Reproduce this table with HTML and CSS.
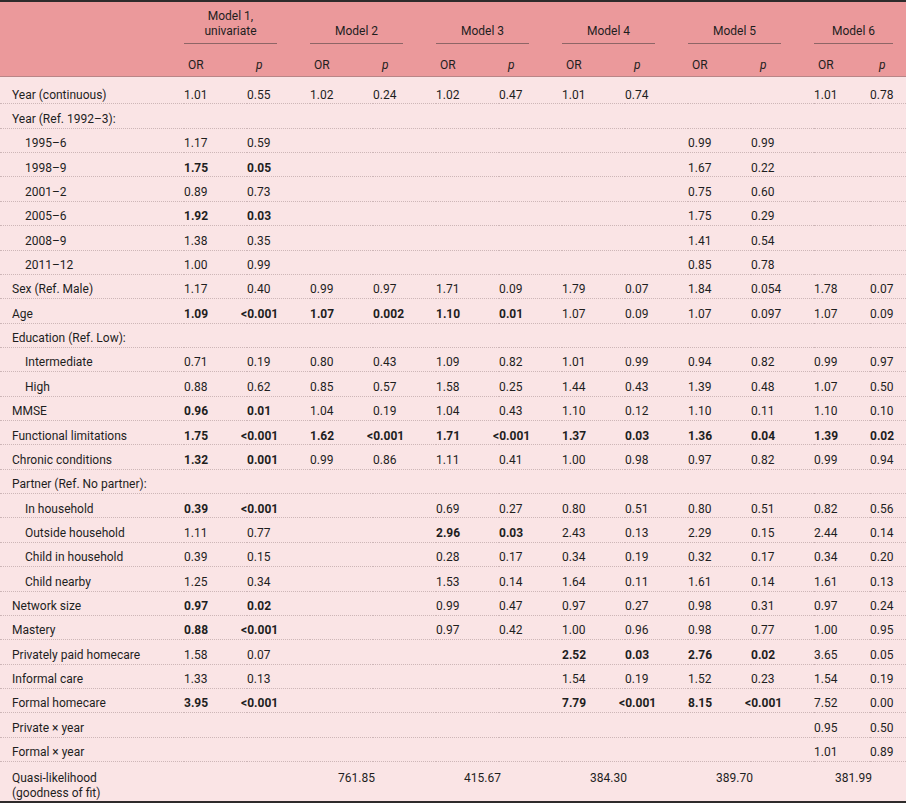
FILE: index.html
```html
<!DOCTYPE html>
<html lang="en">
<head>
<meta charset="utf-8">
<title>Table</title>
<link rel="stylesheet" href="styles.css">
</head>
<body>
<table class="t">
  <colgroup>
    <col class="c-lab">
    <col class="c-d"><col class="c-d">
    <col class="c-d"><col class="c-d">
    <col class="c-d"><col class="c-d">
    <col class="c-d"><col class="c-d">
    <col class="c-d"><col class="c-d">
    <col class="c-or6"><col class="c-p6">
  </colgroup>
  <thead>
    <tr class="h1">
      <th class="lab"></th>
      <th colspan="2" class="grp"><div class="gl">Model 1,<br>univariate</div></th>
      <th colspan="2" class="grp"><div class="gl">Model 2</div></th>
      <th colspan="2" class="grp"><div class="gl">Model 3</div></th>
      <th colspan="2" class="grp"><div class="gl">Model 4</div></th>
      <th colspan="2" class="grp"><div class="gl">Model 5</div></th>
      <th colspan="2" class="grp"><div class="gl last">Model 6</div></th>
    </tr>
    <tr class="h2">
      <th class="lab"></th>
      <th class="or">OR</th><th class="ph"><i>p</i></th>
      <th class="or">OR</th><th class="ph"><i>p</i></th>
      <th class="or">OR</th><th class="ph"><i>p</i></th>
      <th class="or">OR</th><th class="ph"><i>p</i></th>
      <th class="or">OR</th><th class="ph"><i>p</i></th>
      <th class="or">OR</th><th class="ph"><i>p</i></th>
    </tr>
  </thead>
  <tbody>
    <tr><td class="lab">Year (continuous)</td><td>1.01</td><td>0.55</td><td>1.02</td><td>0.24</td><td>1.02</td><td>0.47</td><td>1.01</td><td>0.74</td><td></td><td></td><td>1.01</td><td>0.78</td></tr>
    <tr><td class="lab">Year (Ref. 1992–3):</td><td></td><td></td><td></td><td></td><td></td><td></td><td></td><td></td><td></td><td></td><td></td><td></td></tr>
    <tr><td class="lab ind">1995–6</td><td>1.17</td><td>0.59</td><td></td><td></td><td></td><td></td><td></td><td></td><td>0.99</td><td>0.99</td><td></td><td></td></tr>
    <tr><td class="lab ind">1998–9</td><td class="b">1.75</td><td class="b">0.05</td><td></td><td></td><td></td><td></td><td></td><td></td><td>1.67</td><td>0.22</td><td></td><td></td></tr>
    <tr><td class="lab ind">2001–2</td><td>0.89</td><td>0.73</td><td></td><td></td><td></td><td></td><td></td><td></td><td>0.75</td><td>0.60</td><td></td><td></td></tr>
    <tr><td class="lab ind">2005–6</td><td class="b">1.92</td><td class="b">0.03</td><td></td><td></td><td></td><td></td><td></td><td></td><td>1.75</td><td>0.29</td><td></td><td></td></tr>
    <tr><td class="lab ind">2008–9</td><td>1.38</td><td>0.35</td><td></td><td></td><td></td><td></td><td></td><td></td><td>1.41</td><td>0.54</td><td></td><td></td></tr>
    <tr><td class="lab ind">2011–12</td><td>1.00</td><td>0.99</td><td></td><td></td><td></td><td></td><td></td><td></td><td>0.85</td><td>0.78</td><td></td><td></td></tr>
    <tr><td class="lab">Sex (Ref. Male)</td><td>1.17</td><td>0.40</td><td>0.99</td><td>0.97</td><td>1.71</td><td>0.09</td><td>1.79</td><td>0.07</td><td>1.84</td><td>0.054</td><td>1.78</td><td>0.07</td></tr>
    <tr><td class="lab">Age</td><td class="b">1.09</td><td class="b"><span class="lt">&lt;</span>0.001</td><td class="b">1.07</td><td class="b">0.002</td><td class="b">1.10</td><td class="b">0.01</td><td>1.07</td><td>0.09</td><td>1.07</td><td>0.097</td><td>1.07</td><td>0.09</td></tr>
    <tr><td class="lab">Education (Ref. Low):</td><td></td><td></td><td></td><td></td><td></td><td></td><td></td><td></td><td></td><td></td><td></td><td></td></tr>
    <tr><td class="lab ind">Intermediate</td><td>0.71</td><td>0.19</td><td>0.80</td><td>0.43</td><td>1.09</td><td>0.82</td><td>1.01</td><td>0.99</td><td>0.94</td><td>0.82</td><td>0.99</td><td>0.97</td></tr>
    <tr><td class="lab ind">High</td><td>0.88</td><td>0.62</td><td>0.85</td><td>0.57</td><td>1.58</td><td>0.25</td><td>1.44</td><td>0.43</td><td>1.39</td><td>0.48</td><td>1.07</td><td>0.50</td></tr>
    <tr><td class="lab">MMSE</td><td class="b">0.96</td><td class="b">0.01</td><td>1.04</td><td>0.19</td><td>1.04</td><td>0.43</td><td>1.10</td><td>0.12</td><td>1.10</td><td>0.11</td><td>1.10</td><td>0.10</td></tr>
    <tr><td class="lab">Functional limitations</td><td class="b">1.75</td><td class="b"><span class="lt">&lt;</span>0.001</td><td class="b">1.62</td><td class="b"><span class="lt">&lt;</span>0.001</td><td class="b">1.71</td><td class="b"><span class="lt">&lt;</span>0.001</td><td class="b">1.37</td><td class="b">0.03</td><td class="b">1.36</td><td class="b">0.04</td><td class="b">1.39</td><td class="b">0.02</td></tr>
    <tr><td class="lab">Chronic conditions</td><td class="b">1.32</td><td class="b">0.001</td><td>0.99</td><td>0.86</td><td>1.11</td><td>0.41</td><td>1.00</td><td>0.98</td><td>0.97</td><td>0.82</td><td>0.99</td><td>0.94</td></tr>
    <tr><td class="lab">Partner (Ref. No partner):</td><td></td><td></td><td></td><td></td><td></td><td></td><td></td><td></td><td></td><td></td><td></td><td></td></tr>
    <tr><td class="lab ind">In household</td><td class="b">0.39</td><td class="b"><span class="lt">&lt;</span>0.001</td><td></td><td></td><td>0.69</td><td>0.27</td><td>0.80</td><td>0.51</td><td>0.80</td><td>0.51</td><td>0.82</td><td>0.56</td></tr>
    <tr><td class="lab ind">Outside household</td><td>1.11</td><td>0.77</td><td></td><td></td><td class="b">2.96</td><td class="b">0.03</td><td>2.43</td><td>0.13</td><td>2.29</td><td>0.15</td><td>2.44</td><td>0.14</td></tr>
    <tr><td class="lab ind">Child in household</td><td>0.39</td><td>0.15</td><td></td><td></td><td>0.28</td><td>0.17</td><td>0.34</td><td>0.19</td><td>0.32</td><td>0.17</td><td>0.34</td><td>0.20</td></tr>
    <tr><td class="lab ind">Child nearby</td><td>1.25</td><td>0.34</td><td></td><td></td><td>1.53</td><td>0.14</td><td>1.64</td><td>0.11</td><td>1.61</td><td>0.14</td><td>1.61</td><td>0.13</td></tr>
    <tr><td class="lab">Network size</td><td class="b">0.97</td><td class="b">0.02</td><td></td><td></td><td>0.99</td><td>0.47</td><td>0.97</td><td>0.27</td><td>0.98</td><td>0.31</td><td>0.97</td><td>0.24</td></tr>
    <tr><td class="lab">Mastery</td><td class="b">0.88</td><td class="b"><span class="lt">&lt;</span>0.001</td><td></td><td></td><td>0.97</td><td>0.42</td><td>1.00</td><td>0.96</td><td>0.98</td><td>0.77</td><td>1.00</td><td>0.95</td></tr>
    <tr><td class="lab">Privately paid homecare</td><td>1.58</td><td>0.07</td><td></td><td></td><td></td><td></td><td class="b">2.52</td><td class="b">0.03</td><td class="b">2.76</td><td class="b">0.02</td><td>3.65</td><td>0.05</td></tr>
    <tr><td class="lab">Informal care</td><td>1.33</td><td>0.13</td><td></td><td></td><td></td><td></td><td>1.54</td><td>0.19</td><td>1.52</td><td>0.23</td><td>1.54</td><td>0.19</td></tr>
    <tr><td class="lab">Formal homecare</td><td class="b">3.95</td><td class="b"><span class="lt">&lt;</span>0.001</td><td></td><td></td><td></td><td></td><td class="b">7.79</td><td class="b"><span class="lt">&lt;</span>0.001</td><td class="b">8.15</td><td class="b"><span class="lt">&lt;</span>0.001</td><td>7.52</td><td>0.00</td></tr>
    <tr><td class="lab">Private × year</td><td></td><td></td><td></td><td></td><td></td><td></td><td></td><td></td><td></td><td></td><td>0.95</td><td>0.50</td></tr>
    <tr><td class="lab">Formal × year</td><td></td><td></td><td></td><td></td><td></td><td></td><td></td><td></td><td></td><td></td><td>1.01</td><td>0.89</td></tr>
    <tr class="fit">
      <td class="lab">Quasi-likelihood<br>(goodness of fit)</td>
      <td colspan="2"></td>
      <td colspan="2"><div class="gv">761.85</div></td>
      <td colspan="2"><div class="gv">415.67</div></td>
      <td colspan="2"><div class="gv">384.30</div></td>
      <td colspan="2"><div class="gv">389.70</div></td>
      <td colspan="2"><div class="gv last">381.99</div></td>
    </tr>
  </tbody>
</table>
</body>
</html>
```

FILE: styles.css
```css
html, body {
  margin: 0;
  padding: 0;
  background: #fae4e5;
}

.t {
  width: 906px;
  table-layout: fixed;
  border-collapse: separate;
  border-spacing: 0;
  border-top: 2px solid #2e2b2b;
  border-bottom: 2px solid #2e2b2b;
  font-family: Roboto, "Liberation Sans", sans-serif;
  font-size: 12px;
  color: #1e1e1e;
  background: #fae4e5;
}

.c-lab { width: 184px; }
.c-d { width: 63px; }
.c-or6 { width: 56px; }
.c-p6 { width: 36px; }

th, td {
  padding: 0;
  text-align: left;
  white-space: nowrap;
  line-height: 15px;
  font-weight: normal;
}

thead th {
  background: #eb999b;
}

.h1 th {
  padding-top: 7px;
  vertical-align: bottom;
}

.gl {
  width: 93px;
  text-align: center;
  padding-bottom: 4px;
  border-bottom: 1px solid #8e6566;
}

.gl.last { width: 79px; }

.h2 th {
  padding-top: 14px;
  padding-bottom: 3px;
  border-bottom: 1px solid #b98587;
}

.h2 .or { padding-left: 4px; }
.h2 .ph { padding-left: 9px; }

tbody td {
  padding-top: 7.5px;
  padding-bottom: 0.87px;
  border-bottom: 1px dotted #cdb6b7;
  vertical-align: top;
}

tbody tr:first-child td {
  padding-top: 10.5px;
}

tbody td.lab { padding-left: 12px; }
tbody td.ind { padding-left: 25px; }

td.b { font-weight: bold; }

.lt { margin-left: -6px; }

tbody tr.fit td {
  padding-top: 8.5px;
  padding-bottom: 0;
  border-bottom: none;
}

.gv {
  width: 93px;
  text-align: center;
}

.gv.last { width: 79px; }
```
